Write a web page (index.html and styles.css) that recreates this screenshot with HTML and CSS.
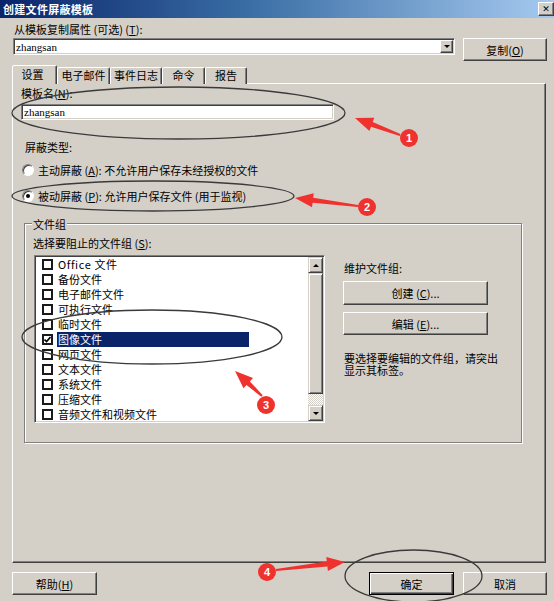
FILE: index.html
```html
<!DOCTYPE html>
<html lang="zh-CN">
<head>
  <meta charset="UTF-8" />
  <title>创建文件屏蔽模板</title>
  <link rel="stylesheet" href="styles.css">
</head>
<body>
  <div class="window">
    <div class="titlebar">
      <span class="title">创建文件屏蔽模板</span>
      <span class="close">✕</span>
    </div>

    <div class="dialog">
      <div class="copy-label">从模板复制属性 (可选) (<u>T</u>):</div>
      <div class="copy-row">
        <div class="combo">
          <span class="combo-text">zhangsan</span>
          <span class="combo-btn"><i class="arrow-down"></i></span>
        </div>
        <button class="btn copy-btn">复制(<u>O</u>)</button>
      </div>

      <div class="tabs">
        <div class="tab active">设置</div>
        <div class="tab tab-mail">电子邮件</div>
        <div class="tab tab-log">事件日志</div>
        <div class="tab tab-cmd">命令</div>
        <div class="tab tab-report">报告</div>
      </div>

      <div class="panel">
        <div class="name-label">模板名(<u>N</u>):</div>
        <div class="name-input">zhangsan</div>

        <div class="type-label">屏蔽类型:</div>
        <div class="radio-row first">
          <span class="radio"></span>
          <span>主动屏蔽 (<u>A</u>): 不允许用户保存未经授权的文件</span>
        </div>
        <div class="radio-row second">
          <span class="radio checked"></span>
          <span>被动屏蔽 (<u>P</u>): 允许用户保存文件 (用于监视)</span>
        </div>

        <div class="group">
          <div class="group-title">文件组</div>
          <div class="list-label">选择要阻止的文件组 (<u>S</u>):</div>
          <div class="group-body">
            <div class="listbox">
              <div class="items">
                <div class="item"><span class="check"></span><span class="item-text office">Office 文件</span></div>
                <div class="item"><span class="check"></span><span class="item-text">备份文件</span></div>
                <div class="item"><span class="check"></span><span class="item-text">电子邮件文件</span></div>
                <div class="item"><span class="check"></span><span class="item-text">可执行文件</span></div>
                <div class="item"><span class="check"></span><span class="item-text">临时文件</span></div>
                <div class="item selected">
                  <span class="check"><svg width="7" height="7" viewBox="0 0 7 7"><path d="M0.5 3.5 L2.6 5.6 L6.5 1" fill="none" stroke="#000" stroke-width="1.6"/></svg></span>
                  <span class="item-text">图像文件</span>
                </div>
                <div class="item"><span class="check"></span><span class="item-text">网页文件</span></div>
                <div class="item"><span class="check"></span><span class="item-text">文本文件</span></div>
                <div class="item"><span class="check"></span><span class="item-text">系统文件</span></div>
                <div class="item"><span class="check"></span><span class="item-text">压缩文件</span></div>
                <div class="item"><span class="check"></span><span class="item-text">音频文件和视频文件</span></div>
              </div>
              <div class="scrollbar">
                <div class="sb-btn"><i class="arrow-up"></i></div>
                <div class="sb-thumb"></div>
                <div class="sb-track"></div>
                <div class="sb-btn"><i class="arrow-down"></i></div>
              </div>
            </div>

            <div class="maint">
              <div class="maint-label">维护文件组:</div>
              <button class="btn maint-btn">创建 (<u>C</u>)...</button>
              <button class="btn maint-btn edit">编辑 (<u>E</u>)...</button>
              <div class="maint-note">要选择要编辑的文件组，请突出显示其标签。</div>
            </div>
          </div>
        </div>
      </div>

      <div class="footer">
        <button class="btn foot-btn">帮助(<u>H</u>)</button>
        <button class="btn foot-btn default ok">确定</button>
        <button class="btn foot-btn cancel">取消</button>
      </div>
    </div>

    <!-- annotations drawn over the dialog -->
    <svg class="marks" width="554" height="601" viewBox="0 0 554 601">
      <g fill="none" stroke="#3a3a3a" stroke-width="1.3">
        <ellipse cx="178.5" cy="113" rx="166.5" ry="26"/>
        <ellipse cx="153" cy="196" rx="141" ry="15"/>
        <ellipse cx="152" cy="337" rx="130" ry="27"/>
        <ellipse cx="413.5" cy="576" rx="68.5" ry="26"/>
      </g>
      <g fill="#f0322e">
        <polygon points="355,118 374.3,117.8 372.7,122 400.4,134.1 399.7,135.9 371,126.7 369.4,130.9"/>
        <polygon points="295,198 313.7,193.3 313.2,197.8 358.1,205 357.9,207 312.6,202.8 312,207.2"/>
        <polygon points="235,371 253,378.1 249.9,381.4 262.7,395.3 261.3,396.7 246.5,385 243.5,388.3"/>
        <polygon points="345,562 326.3,557.1 326.8,561.6 275.9,569 276.1,571 327.4,566.6 327.9,571"/>
        <circle cx="409" cy="138" r="9"/>
        <circle cx="367" cy="207" r="9"/>
        <circle cx="266" cy="405" r="9"/>
        <circle cx="267" cy="572" r="9"/>
      </g>
      <g class="badge-num" fill="#fff" text-anchor="middle">
        <text x="409" y="142">1</text>
        <text x="367" y="211">2</text>
        <text x="266" y="409">3</text>
        <text x="267" y="576">4</text>
      </g>
    </svg>
  </div>
</body>
</html>
```

FILE: styles.css
```css
body {
  margin: 0;
  padding: 0;
  background-color: #d4d0c8;
  color: #000;
  font-family: "Noto Sans CJK SC", "Noto Sans", sans-serif;
  font-size: 11px;
}
u { text-decoration: underline; }

.window {
  position: relative;
  width: 554px;
  height: 601px;
  overflow: hidden;
  background-color: #d4d0c8;
}

/* title bar */
.titlebar {
  height: 18px;
  display: flex;
  align-items: center;
  justify-content: space-between;
  background: linear-gradient(to right, #0a246a, #3a6ea5 45%, #a6caf0);
}
.title {
  color: #fff;
  font-weight: bold;
  padding-left: 3px;
  letter-spacing: 0.3px;
  line-height: 18px;
}
.close {
  width: 16px;
  height: 14px;
  box-sizing: border-box;
  background: #d4d0c8;
  border: 1px solid;
  border-color: #fff #404040 #404040 #fff;
  box-shadow: inset -1px -1px #808080;
  font-size: 9px;
  font-weight: bold;
  line-height: 12px;
  text-align: center;
  font-family: "DejaVu Sans", sans-serif;
}

.dialog { padding: 0 7px 0 12px; }

/* generic classic widgets */
.btn {
  box-sizing: border-box;
  background: #d4d0c8;
  border: 1px solid;
  border-color: #fff #404040 #404040 #fff;
  box-shadow: inset -1px -1px #808080;
  font: inherit;
  color: #000;
  padding: 0;
  margin: 0;
}
.btn.default {
  border: 1px solid #000;
  box-shadow: inset 1px 1px #fff, inset -1px -1px #404040, inset -2px -2px #808080;
}
.sunken {
  border: 1px solid;
}

.copy-label {
  margin: 4px 0 0 2px;
  line-height: 14px;
}
.copy-row {
  display: flex;
  align-items: flex-start;
  margin-top: 2px;
}
.combo {
  margin-left: 1px;
  width: 442px;
  height: 17px;
  box-sizing: border-box;
  background: #fff;
  border: 1px solid;
  border-color: #808080 #fff #fff #808080;
  box-shadow: inset 1px 1px #404040, inset -1px -1px #d4d0c8;
  display: flex;
  align-items: center;
  padding-left: 2px;
}
.combo-text, .name-input {
  font-family: "Liberation Serif", serif;
  font-size: 11px;
}
.combo-btn {
  margin-left: auto;
  margin-right: 1px;
  width: 13px;
  height: 13px;
  box-sizing: border-box;
  background: #d4d0c8;
  border: 1px solid;
  border-color: #fff #404040 #404040 #fff;
  box-shadow: inset -1px -1px #808080;
  display: flex;
  align-items: center;
  justify-content: center;
}
.arrow-down, .arrow-up {
  display: block;
  width: 0;
  height: 0;
  border-left: 3px solid transparent;
  border-right: 3px solid transparent;
}
.arrow-down { border-top: 3px solid #000; }
.arrow-up { border-bottom: 3px solid #000; }
.copy-btn {
  margin-left: 8px;
  width: 84px;
  height: 23px;
}

/* tabs */
.tabs {
  position: relative;
  z-index: 1;
  display: flex;
  align-items: flex-end;
  height: 19px;
  margin-top: 4px;
}
.tab {
  height: 17px;
  box-sizing: border-box;
  border: 1px solid;
  border-bottom: none;
  border-color: #fff #404040 transparent #fff;
  box-shadow: inset -1px 0 #808080;
  border-radius: 2px 2px 0 0;
  text-align: center;
  line-height: 15px;
  background: #d4d0c8;
}
.tab.active {
  width: 45px;
  height: 19px;
  line-height: 17px;
  padding-right: 4px;
}
.tab-mail { width: 53px; }
.tab-log { width: 52px; }
.tab-cmd { width: 43px; }
.tab-report { width: 42px; }

/* tab page */
.panel {
  margin-top: -1px;
  width: 534px;
  height: 480px;
  box-sizing: border-box;
  border: 1px solid;
  border-color: #fff #404040 #404040 #fff;
  box-shadow: inset -1px -1px #808080;
  padding: 2px 0 0 8px;
}
.name-label { line-height: 14px; }
.name-input {
  margin-top: 4px;
  width: 313px;
  height: 16px;
  box-sizing: border-box;
  background: #fff;
  border: 1px solid;
  border-color: #808080 #fff #fff #808080;
  box-shadow: inset 1px 1px #404040, inset -1px -1px #d4d0c8;
  padding-left: 2px;
  line-height: 14px;
}
.type-label {
  margin: 20px 0 0 4px;
  line-height: 14px;
}
.radio-row {
  display: flex;
  align-items: center;
  gap: 4px;
  height: 14px;
  margin-left: 1px;
}
.radio-row.first { margin-top: 9px; }
.radio-row.second { margin-top: 12px; }
.radio {
  position: relative;
  width: 12px;
  height: 12px;
  box-sizing: border-box;
  border-radius: 50%;
  background: #fff;
  border: 1px solid;
  border-color: #808080 #fff #fff #808080;
  box-shadow: inset 1px 1px #404040;
}
.radio.checked::after {
  content: "";
  position: absolute;
  left: 3px;
  top: 3px;
  width: 4px;
  height: 4px;
  border-radius: 50%;
  background: #000;
}

/* group box */
.group {
  margin: 20px 0 0 3px;
  width: 498px;
  height: 220px;
  box-sizing: border-box;
  border: 1px solid #808080;
  box-shadow: inset 1px 1px #fff, 1px 1px #fff;
  padding-left: 8px;
}
.group-title {
  width: fit-content;
  margin: -7px 0 0 -1px;
  padding: 0 1px;
  line-height: 14px;
  background: #d4d0c8;
}
.list-label {
  margin-top: 5px;
  line-height: 14px;
}
.group-body {
  display: flex;
  margin: 5px 0 0 1px;
}
.listbox {
  width: 291px;
  height: 168px;
  box-sizing: border-box;
  display: flex;
  background: #fff;
  border: 1px solid;
  border-color: #808080 #fff #fff #808080;
  box-shadow: inset 1px 1px #404040, inset -1px -1px #d4d0c8;
  padding: 1px;
}
.items {
  flex: 1;
  overflow: hidden;
}
.item {
  height: 15px;
  display: flex;
  align-items: center;
  padding-left: 6px;
}
.check {
  width: 11px;
  height: 11px;
  box-sizing: border-box;
  border: 2px solid #1a1a1a;
  background: #fff;
  display: flex;
  align-items: center;
  justify-content: center;
}
.item-text {
  margin-left: 4px;
  padding: 0 1px;
  line-height: 15px;
}
.item-text.office { letter-spacing: 0.6px; }
.item.selected .item-text {
  width: 192px;
  box-sizing: border-box;
  background: #0a246a;
  color: #fff;
}
.scrollbar {
  width: 15px;
  display: flex;
  flex-direction: column;
  background: #d4d0c8;
}
.sb-btn, .sb-thumb {
  box-sizing: border-box;
  background: #d4d0c8;
  border: 1px solid;
  border-color: #d4d0c8 #404040 #404040 #d4d0c8;
  box-shadow: inset 1px 1px #fff, inset -1px -1px #808080;
  flex-shrink: 0;
}
.sb-btn {
  height: 16px;
  display: flex;
  align-items: center;
  justify-content: center;
}
.sb-thumb { height: 121px; }
.sb-track {
  flex: 1;
  background: repeating-conic-gradient(#fff 0 25%, #d4d0c8 0 50%) 0 0 / 2px 2px;
}

.maint {
  margin-left: 18px;
  width: 145px;
  padding-top: 6px;
}
.maint-label {
  margin-left: 1px;
  line-height: 14px;
}
.maint-btn {
  display: block;
  width: 145px;
  height: 24px;
  margin-top: 6px;
}
.maint-btn.edit {
  height: 23px;
  margin-top: 7px;
}
.maint-note {
  width: 160px;
  margin: 17px 0 0 1px;
  line-height: 12px;
}

/* bottom buttons */
.footer {
  display: flex;
  margin-top: 9px;
}
.foot-btn {
  width: 85px;
  height: 23px;
}
.foot-btn.ok { margin-left: auto; }
.foot-btn.cancel {
  margin-left: 9px;
  width: 84px;
}

/* annotation layer */
.marks {
  position: absolute;
  left: 0;
  top: 0;
  pointer-events: none;
}
.badge-num {
  font-family: "Liberation Sans", sans-serif;
  font-size: 11px;
  font-weight: bold;
}
```
